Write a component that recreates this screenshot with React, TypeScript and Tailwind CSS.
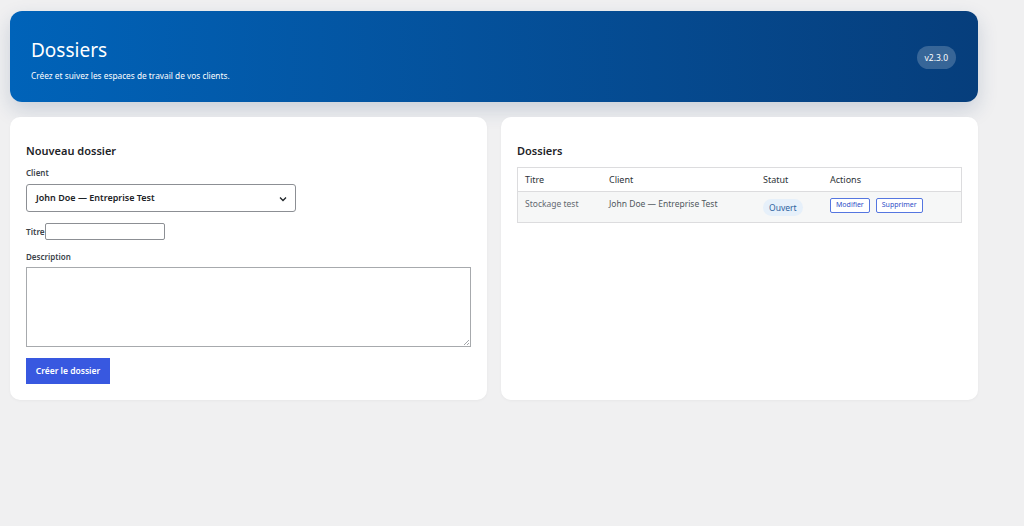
import React from "react";

export default function App() {
  return (
    <div
      className="min-h-[526px] w-full bg-[#f0f0f1] text-[#1d2327]"
      style={{ fontFamily: '"Noto Sans", "Open Sans", sans-serif' }}
    >
      <div className="ml-[10px] w-[968px] pt-[11px]">
        <header className="flex h-[91px] items-center justify-between rounded-[12px] bg-gradient-to-r from-[#0063b9] to-[#063e7c] px-[21px] shadow-[0_8px_20px_rgba(30,60,110,0.18)]">
          <div className="pt-[7px]">
            <h1 className="text-[19px] font-normal leading-[24px] text-white">Dossiers</h1>
            <p className="mt-[8px] text-[8.3px] leading-[12px] text-white">
              Créez et suivez les espaces de travail de vos clients.
            </p>
          </div>
          <span className="mr-[1px] mt-[2px] flex h-[23px] items-center rounded-full bg-white/20 px-[8px] text-[8.5px] font-normal leading-[12px] text-white">
            v2.3.0
          </span>
        </header>

        <div className="mt-[15px] grid grid-cols-2 gap-[14px]">
          <section className="rounded-[10px] bg-white px-[16px] pb-[16px] pt-[26px] shadow-[0_1px_3px_rgba(0,0,0,0.04)]">
            <h2 className="text-[11px] font-semibold leading-[16px] text-[#1d2327]">Nouveau dossier</h2>
            <label className="mt-[8px] block text-[8px] font-semibold leading-[12px] text-[#3c434a]">Client</label>
            <div className="relative mt-[5px] flex h-[28px] w-[270px] items-center rounded-[3px] border border-[#8c8f94] bg-white pl-[9px] text-[9px] font-semibold text-[#1d2327]">
              John Doe — Entreprise Test
              <svg
                className="absolute right-[8px] top-[11px]"
                width="8"
                height="6"
                viewBox="0 0 8 6"
                fill="none"
              >
                <path d="M1 1.5 L4 4.5 L7 1.5" stroke="#1d2327" strokeWidth="1.3" />
              </svg>
            </div>
            <div className="mt-[11px] flex items-center">
              <span className="text-[8.3px] font-semibold leading-[12px] text-[#3c434a]">Titre</span>
              <div className="h-[17px] w-[120px] rounded-[2px] border border-[#8c8f94] bg-white" />
            </div>
            <label className="mt-[11px] block text-[8px] font-semibold leading-[12px] text-[#3c434a]">Description</label>
            <div className="relative mt-[4px] h-[80px] w-full border border-[#a7aaad] bg-white">
              <svg className="absolute bottom-[1px] right-[1px]" width="6" height="6" viewBox="0 0 6 6">
                <path d="M6 1 L1 6 M6 4 L4 6" stroke="#8c8f94" strokeWidth="0.8" />
              </svg>
            </div>
            <button className="mt-[11px] flex h-[26px] w-[84px] items-center justify-center bg-[#3858e0] text-[8.5px] font-semibold text-white">
              Créer le dossier
            </button>
          </section>

          <section className="rounded-[10px] bg-white px-[16px] pb-[16px] pt-[26px] shadow-[0_1px_3px_rgba(0,0,0,0.04)]">
            <h2 className="text-[11px] font-semibold leading-[16px] text-[#1d2327]">Dossiers</h2>
            <div className="mt-[8px] border border-[#dcdcde] text-[9px] text-[#50575e]">
              <div className="grid h-[24px] grid-cols-[84px_154px_67px_1fr] items-center border-b border-[#dcdcde] bg-white pl-[7px] text-[#2c3338]">
                <span>Titre</span>
                <span>Client</span>
                <span>Statut</span>
                <span>Actions</span>
              </div>
              <div className="grid h-[30px] grid-cols-[84px_154px_67px_1fr] items-start bg-[#f6f7f7] pl-[7px] pt-[6px]">
                <span className="text-[8.5px] leading-[12px] text-[#646970]">Stockage test</span>
                <span className="text-[8.5px] leading-[12px] text-[#50575e]">John Doe — Entreprise Test</span>
                <span>
                  <span className="mt-[1px] inline-block h-[17px] rounded-full bg-[#e6f0fa] px-[6px] text-[8.5px] leading-[17px] text-[#2c5f9e]">
                    Ouvert
                  </span>
                </span>
                <span className="flex gap-[6px]">
                  <span className="flex h-[15px] items-center rounded-[2px] border border-[#5576e0] bg-white px-[5px] text-[7px] text-[#2f4fc8]">
                    Modifier
                  </span>
                  <span className="flex h-[15px] items-center rounded-[2px] border border-[#5576e0] bg-white px-[5px] text-[7px] text-[#2f4fc8]">
                    Supprimer
                  </span>
                </span>
              </div>
            </div>
          </section>
        </div>
      </div>
    </div>
  );
}
